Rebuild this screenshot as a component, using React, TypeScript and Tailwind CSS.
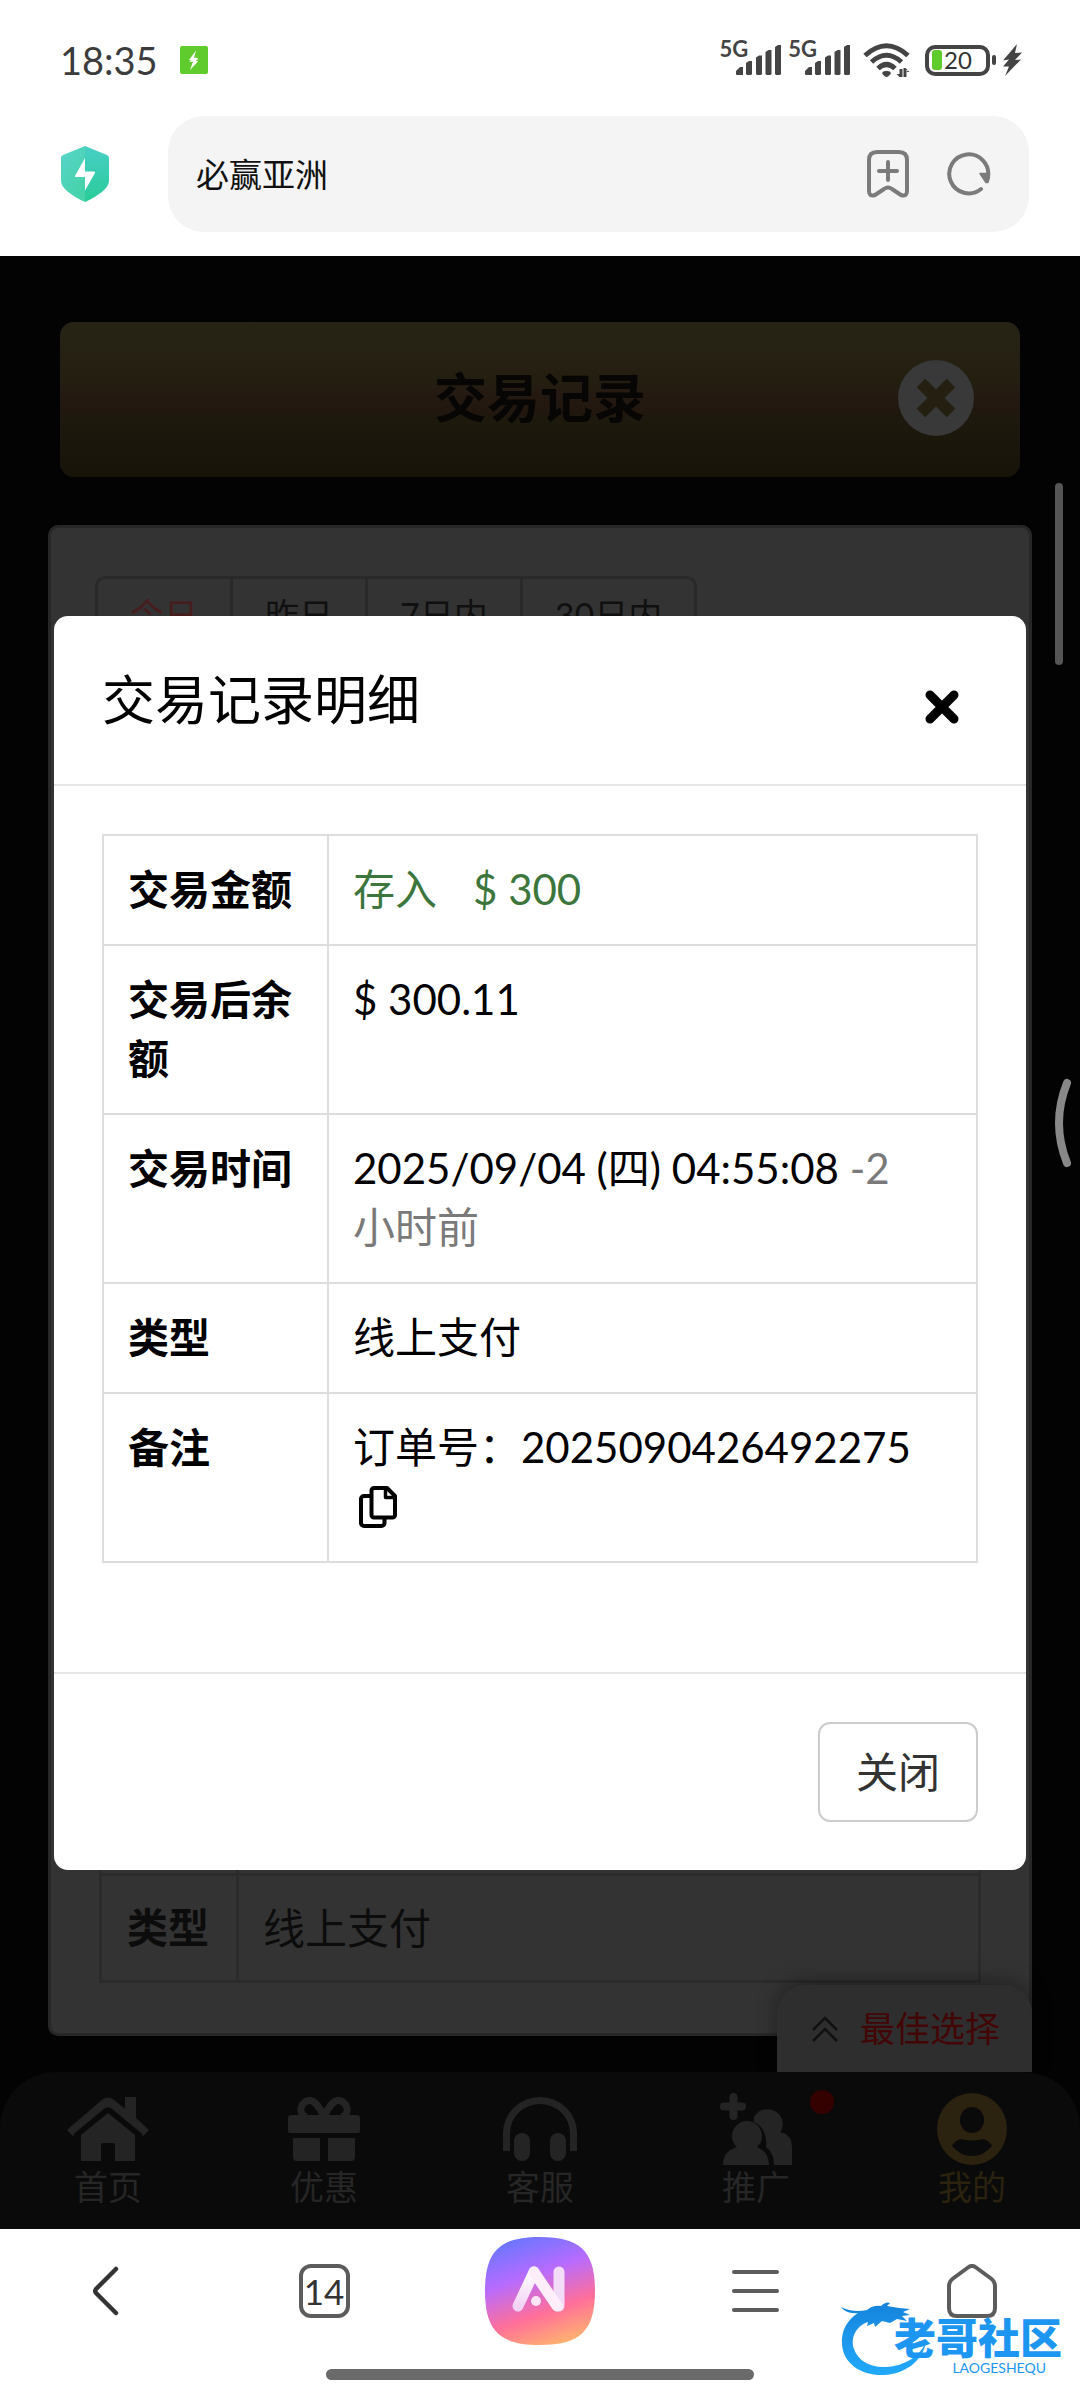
import React from "react";

const rows: { label: string; value: React.ReactNode }[] = [
  {
    label: "交易金额",
    value: (
      <span className="flex gap-9 text-[#3c763d]">
        <span>存入</span>
        <span>$ 300</span>
      </span>
    ),
  },
  { label: "交易后余额", value: "$ 300.11" },
  {
    label: "交易时间",
    value: (
      <>
        2025/09/04 (四) 04:55:08 <span className="text-[#7a7a7a]">-2<br />小时前</span>
      </>
    ),
  },
  { label: "类型", value: "线上支付" },
  {
    label: "备注",
    value: (
      <>
        订单号：2025090426492275
        <button type="button" aria-label="复制" className="flex h-[59px] items-center pl-1.5">
          <CopyIcon />
        </button>
      </>
    ),
  },
];

function CopyIcon() {
  return (
    <svg width="38" height="42" viewBox="0 0 38 42" fill="none" stroke="#000" strokeWidth="4" strokeLinejoin="round">
      <path d="M15 2h13l8 8v19a2.500 2.500 0 0 1-2.500 2.500h-18.500a2.500 2.500 0 0 1-2.500-2.500v-24.500a2.500 2.500 0 0 1 2.500-2.500z" />
      <path d="M26.500 2v9.500h9.500" strokeWidth="3.500" />
      <path d="M12 10H5a3 3 0 0 0-3 3v24a3 3 0 0 0 3 3h17.500a3 3 0 0 0 3-3v-5" />
    </svg>
  );
}

function Signal() {
  return (
    <span className="flex items-start text-[#444]">
      <span className="-mt-2 text-[22px] leading-6 font-bold">5G</span>
      <svg width="46" height="30" viewBox="0 0 46 30" className="-ml-3" fill="currentColor">
        <path d="M0 29v-3l4-4h3v8H1a1 1 0 0 1-1-1zM10 18l3-2h3v13l-1 1h-4l-1-1zM20 12.500l3-2h3V29l-1 1h-4l-1-1zM29.500 7l3-2h3v24l-1 1h-4l-1-1zM39 2l3-2h3v29l-1 1h-4l-1-1z" />
      </svg>
    </span>
  );
}

function Wifi() {
  return (
    <svg width="48" height="34" viewBox="0 0 48 34" fill="none" stroke="#444" strokeWidth="5">
      <path d="M2 12.500Q23.500-7 45 12.500" />
      <path d="M8.500 19Q23.500 5.500 38.500 19" />
      <path d="M15 25.500Q23.500 17.500 32 25.500" />
      <path d="M23.500 28c3.500 0 5 1.500 4 3s-2.600 3-4 3-3-1.500-4-3 .5-3 4-3z" fill="#444" stroke="none" />
      <path d="M36.500 34v-8h3v9h-2l-4-4h3zM45.500 27h-2l0 7h-3v-9h2l4 4h-3z" fill="#444" stroke="none" />
    </svg>
  );
}

function StatusBar() {
  return (
    <div className="flex h-[116px] items-center justify-between pt-1 pr-[58px] pl-[60px]">
      <div className="flex items-center gap-[22px]">
        <span className="text-[38px] leading-none text-[#3c3c3c]">18:35</span>
        <svg width="28" height="28" viewBox="0 0 28 28">
          <rect width="28" height="28" rx="2" fill="#5fcb2d" />
          <path d="M16 4.500 9 14h3l-3 1 2 1 2-.5-3 8.500 8.500-9h-3l3-2-2.500-1.500-2 .5z" fill="#fff" />
        </svg>
      </div>
      <div className="flex items-center">
        <Signal />
        <span className="ml-1.5 flex"><Signal /></span>
        <span className="ml-3"><Wifi /></span>
        <div className="ml-3.5 flex items-center">
          <div className="flex h-[31px] w-[65px] items-center gap-0.5 rounded-[10px] border-4 border-[#444] px-[3px]">
            <span className="h-5 w-2.5 shrink-0 rounded-[3px] bg-[#5fcb2d]" />
            <span className="text-[24px] leading-5 text-[#333]">20</span>
          </div>
          <span className="ml-0.5 h-2.5 w-1 rounded-sm bg-[#444]" />
        </div>
        <svg width="20" height="32" viewBox="0 0 20 32" className="ml-1.5" fill="#444">
          <path d="M15 0 1 16.500l6-1-6 7h6L3 32l16-16.500-6 .5 7-7.500-7 .5z" />
        </svg>
      </div>
    </div>
  );
}

function AddressBar() {
  return (
    <div className="flex items-center pr-[51px] pb-6 pl-[60px]">
      <svg width="50" height="58" viewBox="0 0 50 58">
        <defs>
          <linearGradient id="shieldA" x1="0" y1="0" x2="0.6" y2="1">
            <stop offset="0" stopColor="#58d4cc" />
            <stop offset="1" stopColor="#46d3a9" />
          </linearGradient>
          <linearGradient id="shieldB" x1="0" y1="0" x2="0" y2="1">
            <stop offset="0" stopColor="#48cfc5" />
            <stop offset="1" stopColor="#29cb99" />
          </linearGradient>
        </defs>
        <path d="M25 1v56C12 51 1 43 1 36V13q0-2 2-3z" fill="url(#shieldA)" />
        <path d="M25 1v56c13-6 24-14 24-21V13q0-2-2-3z" fill="url(#shieldB)" />
        <path d="M25 13 15 31q-.5 1 .5 1h9.500v13.500l10-17.500q.5-1.500-.8-1.500H25z" fill="#fff" />
      </svg>
      <div className="ml-[58px] flex h-[116px] flex-1 items-center rounded-[36px] bg-[#f4f4f4] pr-[38px] pl-7">
        <input
          aria-label="地址栏"
          defaultValue="必赢亚洲"
          className="min-w-0 flex-1 bg-transparent text-[33px] leading-10 text-[#111] outline-none"
        />
        <button type="button" aria-label="添加书签">
          <svg width="42" height="48" viewBox="0 0 42 48" fill="none" stroke="#7b7b7b" strokeWidth="4" strokeLinecap="round" strokeLinejoin="round">
            <path d="M10 2h22q8 0 8 8v31q0 6-6 4l-9-6q-4-3-8 0l-9 6q-6 2-6-4V10q0-8 8-8zM12 21h18M21 12v18" />
          </svg>
        </button>
        <button type="button" aria-label="刷新" className="ml-[38px]">
          <svg width="44" height="44" viewBox="0 0 44 44" fill="none" stroke="#7b7b7b" strokeWidth="4" strokeLinecap="round">
            <path d="M34 37A19.500 19.500 0 1 1 41 25" />
            <path d="M33 21.500h9q1 5-1 9l-2 0z" fill="#7b7b7b" strokeWidth="1.500" strokeLinejoin="round" />
          </svg>
        </button>
      </div>
    </div>
  );
}

function XMark({ size, color }: { size: number; color: string }) {
  return (
    <svg width={size} height={size} viewBox="0 0 36 36" fill="none" stroke={color} strokeWidth="9" strokeLinecap="round">
      <path d="M6 6l24 24M30 6L6 30" />
    </svg>
  );
}

const navItems = [
  {
    label: "首页",
    icon: (
      <svg width="82" height="64" viewBox="0 0 82 64" fill="#242424">
        <path d="M0 33 36 2q5-3 10 0l12 10V0h11v21l13 12-6 6-33-28q-2-1-4 0L6 39z" />
        <path d="M41 16 68 38v26H48V48q0-2-2-2H36q-2 0-2 2v16H14V38z" />
        <path d="M8 38 38 13q3-2 6 0l30 25" fill="none" stroke="#0a0a0a" strokeWidth="3" />
      </svg>
    ),
  },
  {
    label: "优惠",
    icon: (
      <svg width="72" height="64" viewBox="0 0 72 64">
        <path d="M36 19C30 8 26 3 21 3.500s-9 6-8 11 4 5 6 5M36 19c6-11 10-16 15-15.500s9 6 8 11-4 5-6 5" fill="none" stroke="#242424" strokeWidth="7" />
        <path d="M3 18h66q3 0 3 3v13q0 2-2 2H2q-2 0-2-2V21q0-3 3-3zM5 41h27v23H9q-4 0-4-4zM40 41h27v19q0 4-4 4H40z" fill="#242424" />
      </svg>
    ),
  },
  {
    label: "客服",
    icon: (
      <svg width="74" height="64" viewBox="0 0 74 64" fill="#242424">
        <path d="M0 54V36a37 36 0 0 1 74 0v18h-7V36a30 29 0 0 0-60 0v18z" />
        <rect x="11" y="36" width="16" height="28" rx="8" />
        <rect x="47" y="36" width="16" height="28" rx="8" />
      </svg>
    ),
  },
  {
    label: "推广",
    badge: true,
    icon: (
      <svg width="72" height="72" viewBox="0 0 72 72" fill="#242424">
        <path d="M4 13.500h18M13.500 4v19" stroke="#242424" strokeWidth="8" strokeLinecap="round" />
        <circle cx="27" cy="43" r="15" />
        <path d="M3 72q0-14 14-18h20q12 5 12 18z" />
        <path d="M34 24a15 14.500 0 1 1 27 14q-1 2 3 2 8 4 8 14v18H54q0-12-8-18 1-8-2-15-4-8-10-10z" />
      </svg>
    ),
  },
  {
    label: "我的",
    active: true,
    icon: (
      <svg width="70" height="72" viewBox="0 0 70 72">
        <ellipse cx="35" cy="36" rx="35" ry="36" fill="#2b220f" />
        <ellipse cx="35" cy="27" rx="12" ry="13" fill="#0a0a0a" />
        <path d="M15 53q3-6 9-7 11 3 22 0 6 1 9 7-8 10-20 10t-20-10z" fill="#0a0a0a" />
      </svg>
    ),
  },
];

function PageNav() {
  return (
    <div className="relative">
      <button
        type="button"
        className="absolute right-12 bottom-full flex h-[87px] w-[255px] items-center justify-end gap-[22px] rounded-t-[28px] bg-[#2e2e2e] pr-8 text-[35px] leading-none text-[#430506] shadow-[0_-4px_20px_rgba(0,0,0,0.35)]"
      >
        <svg width="26" height="26" viewBox="0 0 26 26" fill="none" stroke="#111" strokeWidth="2.500">
          <path d="M1 14 13 2l12 12M1 25l12-12 12 12" />
        </svg>
        最佳选择
      </button>
      <nav className="relative grid h-[157px] grid-cols-5 rounded-t-[56px] bg-[#0a0a0a]">
        {navItems.map((item) => (
          <a
            key={item.label}
            href="#"
            className={
              item.active
                ? "relative flex flex-col items-center pt-5 text-[34px] leading-[42px] text-[#2b220f]"
                : "relative flex flex-col items-center pt-5 text-[34px] leading-[42px] text-[#262626]"
            }
          >
            <span className="flex h-[74px] items-center">{item.icon}</span>
            {item.label}
            {item.badge && <span className="absolute top-[18px] right-[30px] h-6 w-6 rounded-full bg-[#350000]" />}
          </a>
        ))}
      </nav>
    </div>
  );
}

function Page() {
  return (
    <div className="col-start-1 row-start-1 flex flex-col bg-[#030303]">
      <div className="mx-[60px] mt-[66px] flex h-[155px] items-center justify-center rounded-[14px] bg-[linear-gradient(#272415_0%,#241e11_38%,#251a12_46%,#21170f_58%,#1d190d_64%,#181309_100%)] pb-[3px] text-[53px] font-bold text-[#070604]">
        <div className="grid w-full grid-cols-[1fr_auto_1fr] items-center pr-[46px]">
          <span />
          <h1 className="pl-[46px]">交易记录</h1>
          <button type="button" aria-label="返回" className="flex size-[76px] items-center justify-center justify-self-end rounded-full bg-[#393939]">
            <svg width="40" height="40" viewBox="0 0 40 40" fill="none" stroke="#241f10" strokeWidth="12">
              <path d="M5 5l30 30M35 5L5 35" />
            </svg>
          </button>
        </div>
      </div>
      <section className="mx-12 mt-12 mb-9 flex flex-1 flex-col rounded-[10px] border-[3px] border-[#272727] bg-[#333] px-11 pt-12 pb-[50px]">
        <div className="flex h-[77px] w-max divide-x-[3px] divide-[#292929] rounded-[10px] border-[3px] border-[#292929] text-[34px] text-[#101010]">
          <button type="button" className="px-8 text-[#481c1c]">今日</button>
          <button type="button" className="px-8">昨日</button>
          <button type="button" className="px-8">7日内</button>
          <button type="button" className="px-8">30日内</button>
        </div>
        <table className="mx-1 mt-auto border-collapse text-left text-[42px] leading-[60px] text-[#0c0c0c]">
          <tbody>
            <tr className="h-[170px]">
              <td className="border-[3px] border-[#2b2b2b]" />
              <td className="border-[3px] border-[#2b2b2b]" />
            </tr>
            <tr>
              <th className="w-[137px] border-[3px] border-[#2b2b2b] px-[25px] py-[22px] text-[41px] whitespace-nowrap">类型</th>
              <td className="border-[3px] border-[#2b2b2b] px-6 py-[22px]">线上支付</td>
            </tr>
          </tbody>
        </table>
      </section>
      <PageNav />
    </div>
  );
}

function DetailModal() {
  return (
    <div className="relative col-start-1 row-start-1 px-[54px] pt-[360px]">
      <div role="dialog" aria-label="交易记录明细" className="rounded-[14px] bg-white text-[42px] leading-[59px] text-black">
        <header className="flex items-end justify-between border-b-2 border-[#e5e5e5] px-12 pt-12 pb-12">
          <h2 className="text-[53px] leading-[72px]">交易记录明细</h2>
          <button type="button" aria-label="关闭窗口" className="flex h-[58px] w-[72px] items-center justify-center">
            <XMark size={36} color="#000" />
          </button>
        </header>
        <div className="px-12 pt-12 pb-[109px]">
          <table className="w-full border-collapse text-left align-top">
            <tbody>
              {rows.map((row) => (
                <tr key={row.label}>
                  <th className="w-[225px] border-2 border-[#ddd] px-6 pt-6 pb-[25px] align-top text-[41px] font-bold">{row.label}</th>
                  <td className="border-2 border-[#ddd] px-6 pt-6 pb-[25px] align-top">{row.value}</td>
                </tr>
              ))}
            </tbody>
          </table>
        </div>
        <footer className="flex justify-end border-t-2 border-[#e5e5e5] px-12 pt-12 pb-12">
          <button type="button" className="h-[100px] rounded-xl border-2 border-[#ccc] px-9 text-[#333]">关闭</button>
        </footer>
      </div>
      <span className="absolute top-[227px] right-[17px] h-[182px] w-2 rounded-full bg-[#555]" />
      <svg width="18" height="90" viewBox="0 0 18 90" className="absolute top-[822px] right-2" fill="none" stroke="#888" strokeWidth="8" strokeLinecap="round">
        <path d="M13 5Q-3 45 13 85" />
      </svg>
    </div>
  );
}

function AiLogo() {
  return (
    <svg width="110" height="108" viewBox="0 0 110 108">
      <defs>
        <linearGradient id="aiBg" x1="0.3" y1="0" x2="0.65" y2="1">
          <stop offset="0" stopColor="#6a76ff" />
          <stop offset="0.35" stopColor="#b76bff" />
          <stop offset="0.7" stopColor="#ff6f9a" />
          <stop offset="1" stopColor="#ffb070" />
        </linearGradient>
        <linearGradient id="aiStroke" x1="0" y1="0" x2="0" y2="1">
          <stop offset="0" stopColor="#fff" />
          <stop offset="1" stopColor="#f3d3f5" />
        </linearGradient>
      </defs>
      <path d="M55 0c40 0 55 14 55 54s-15 54-55 54S0 94 0 54 15 0 55 0z" fill="url(#aiBg)" />
      <g fill="none" strokeWidth="11" strokeLinecap="round" strokeLinejoin="round">
        <path d="M33 69 49 35" stroke="url(#aiStroke)" />
        <path d="M74 35v34" stroke="#f3dcf8" />
        <path d="M49 35 72 69" stroke="#fdeefa" />
      </g>
      <circle cx="51" cy="64" r="5" fill="#fbe6f5" />
    </svg>
  );
}

function Watermark() {
  return (
    <div className="pointer-events-none absolute right-[18px] bottom-6 flex h-[78px] w-[222px] flex-col items-end justify-end text-[#1c96f0]">
      <svg width="104" height="78" viewBox="0 0 104 78" className="absolute top-0 left-0">
        <defs>
          <linearGradient id="dragon" x1="0" y1="0" x2="0" y2="1">
            <stop offset="0" stopColor="#1583dc" />
            <stop offset="1" stopColor="#22aafa" />
          </linearGradient>
        </defs>
        <path
          d="M1 9q12 6 26 3 6-5 14-4 5-5 9-3l-3 3 12 2 11 1-7 3 7 3-8 1 5 5-10-2-7 4-8-2-7 6-1-4-7 3 1-4C16 28 10 40 14 51c4 12 17 19 32 18 19-1 34-11 40-25-3 18-20 32-42 33C22 78 3 66 2 46 1 33 7 22 18 15 10 16 4 13 1 9z"
          fill="url(#dragon)"
        />
      </svg>
      <span className="relative text-[42px] leading-[44px] font-black">老哥社区</span>
      <span className="relative mr-4 text-[14px] leading-4">LAOGESHEQU</span>
    </div>
  );
}

function BrowserBar() {
  return (
    <footer className="relative bg-white pb-5">
      <div className="grid h-[124px] grid-cols-5 items-center justify-items-center">
        <button type="button" aria-label="后退">
          <svg width="32" height="50" viewBox="0 0 32 50" fill="none" stroke="#333" strokeWidth="4.500" strokeLinecap="round" strokeLinejoin="round">
            <path d="M24 3 4 23q-1.500 2 0 4l20 20" />
          </svg>
        </button>
        <button type="button" aria-label="标签页" className="flex h-[54px] w-[51px] items-center justify-center rounded-[12px] border-4 border-[#5c5c5c] text-[35px] leading-none text-[#333]">
          14
        </button>
        <button type="button" aria-label="AI">
          <AiLogo />
        </button>
        <button type="button" aria-label="菜单">
          <svg width="48" height="44" viewBox="0 0 48 44" stroke="#5c5c5c" strokeWidth="4" strokeLinecap="round">
            <path d="M2 3h43M2 22h43M2 41h43" />
          </svg>
        </button>
        <button type="button" aria-label="主页">
          <svg width="50" height="54" viewBox="0 0 50 54" fill="none" stroke="#5c5c5c" strokeWidth="4" strokeLinejoin="round">
            <path d="M21 3.500q4-3 8 0l15 11q4 3 4 8V44q0 8-8 8H10q-8 0-8-8V22.500q0-5 4-8z" />
          </svg>
        </button>
      </div>
      <div className="mx-auto mt-4 h-[11px] w-[428px] rounded-full bg-[#6a6a6a]" />
      <Watermark />
    </footer>
  );
}

export default function App() {
  return (
    <div className="flex min-h-screen flex-col bg-white font-['Lato','Noto_Sans_CJK_SC',sans-serif]">
      <header>
        <StatusBar />
        <AddressBar />
      </header>
      <main className="grid flex-1">
        <Page />
        <DetailModal />
      </main>
      <BrowserBar />
    </div>
  );
}
